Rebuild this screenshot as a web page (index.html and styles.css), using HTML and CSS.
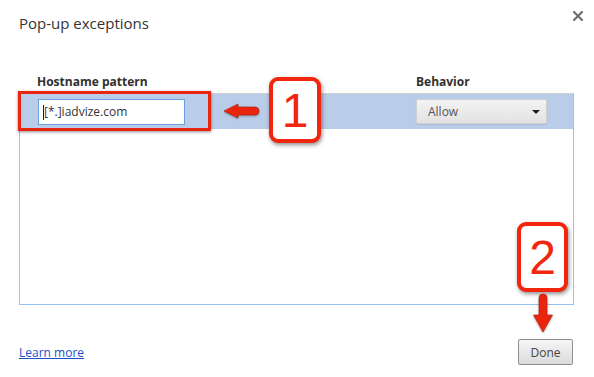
FILE: index.html
```html
<!DOCTYPE html>
<html>
<head>
<meta charset="utf-8">
<title>Pop-up exceptions</title>
<link rel="stylesheet" href="styles.css">
</head>
<body>
<div class="dialog">
  <header class="head">
    <h1 class="title">Pop-up exceptions</h1>
    <svg class="close" width="10" height="10" viewBox="0 0 10 10"><path d="M1 1 L9 9 M9 1 L1 9" stroke="#6f6f6f" stroke-width="2.2" stroke-linecap="square"/></svg>
  </header>

  <div class="cols">
    <span class="col-label">Hostname pattern</span>
    <span class="col-label">Behavior</span>
  </div>

  <div class="list">
    <div class="row selected">
      <div class="field"><span class="caret"></span>[*.]iadvize.com</div>
      <div class="select"><span>Allow</span><span class="tri"></span></div>
    </div>
  </div>

  <footer class="foot">
    <a class="learn" href="#">Learn more</a>
    <button class="done">Done</button>
  </footer>

  <div class="hl"></div>
  <svg class="arrow-left" width="40" height="18" viewBox="0 0 40 18"><path d="M2 9 L16 2 L16 5 L33 5 A4 4 0 0 1 33 13 L16 13 L16 16 Z" fill="#ea250e" stroke="#b51a08" stroke-width="0.6"/></svg>
  <div class="num num1">1</div>
  <div class="num num2">2</div>
  <svg class="arrow-down" width="22" height="42" viewBox="0 0 22 42"><path d="M7 6 A4 4 0 0 1 15 6 L15 23 L20.5 23 L11 40 L1.5 23 L7 23 Z" fill="#ea250e" stroke="#b51a08" stroke-width="0.6"/></svg>
</div>
</body>
</html>
```

FILE: styles.css
```css
* { box-sizing: border-box; }
html, body { margin: 0; padding: 0; background: #ffffff; }
body { font-family: "Open Sans", "Noto Sans", "Liberation Sans", sans-serif; color: #333; }

.dialog {
  position: relative;
  width: 594px;
  height: 377px;
  background: #fff;
  padding: 0 20px 0 19px;
  display: flex;
  flex-direction: column;
}

.head {
  display: flex;
  justify-content: space-between;
  align-items: flex-start;
  padding: 13px 0 0 0;
  margin-right: -9px;
}
.title {
  margin: 0;
  font-size: 15px;
  line-height: 20px;
  font-weight: normal;
  color: #333;
}
.close { margin-top: -2px; display: block; }

.cols {
  display: grid;
  grid-template-columns: 1fr 132px;
  padding: 0 26px 0 18px;
  margin-top: 41px;
}
.col-label {
  font-size: 12px;
  line-height: 16px;
  font-weight: bold;
  color: #303030;
}

.list {
  margin-top: 3px;
  height: 212px;
  border: 1px solid #97c1f3;
  border-top-color: #cfcfcf;
}
.row {
  display: grid;
  grid-template-columns: 1fr 131px;
  align-items: start;
  height: 35px;
  padding: 5px 26px 0 18px;
}
.row.selected { background: #bacde8; }

.field {
  width: 147px;
  height: 26px;
  background: #fff;
  border: 1px solid #6a9fe2;
  font-size: 12px;
  line-height: 24px;
  padding-left: 4px;
  color: #333;
  display: flex;
  align-items: center;
  white-space: nowrap;
}
.caret {
  display: inline-block;
  width: 1px;
  height: 15px;
  background: #222;
  margin-right: 0;
}

.select {
  height: 25px;
  border: 1px solid #d0d0d0;
  border-radius: 2px;
  background: linear-gradient(#f3f3f3, #e2e2e2);
  box-shadow: 0 1px 1px rgba(0,0,0,0.08);
  display: flex;
  align-items: center;
  justify-content: space-between;
  padding: 0 6px 0 11px;
  font-size: 12px;
  color: #555;
}
.tri {
  width: 0;
  height: 0;
  border-left: 4px solid transparent;
  border-right: 4px solid transparent;
  border-top: 4px solid #1e1e1e;
}

.foot {
  margin-top: 34px;
  display: flex;
  justify-content: space-between;
  align-items: center;
  margin-right: 1px;
  margin-left: 0;
}
.learn {
  font-size: 12px;
  line-height: 16px;
  color: #1b50c8;
  text-decoration: underline;
  margin-top: 2px;
}
.done {
  width: 55px;
  height: 26px;
  border: 1px solid #8e8e8e;
  border-radius: 2px;
  background: linear-gradient(#f5f5f5, #dcdcdc);
  font-family: "Open Sans", "Noto Sans", sans-serif;
  font-size: 12px;
  color: #444;
  padding: 0;
}

/* annotations */
.hl {
  position: absolute;
  left: 18px;
  top: 91px;
  width: 193px;
  height: 40px;
  border: 3px solid #e8250f;
  box-shadow: 0 1px 3px rgba(0,0,0,0.45);
}
.arrow-left {
  position: absolute;
  left: 222px;
  top: 102px;
  filter: drop-shadow(0 1px 1px rgba(0,0,0,0.35));
}
.arrow-down {
  position: absolute;
  left: 532px;
  top: 292px;
  filter: drop-shadow(0 1px 1px rgba(0,0,0,0.35));
}
.num {
  position: absolute;
  background: #fff;
  border: 4px solid #f2250d;
  border-radius: 9px;
  box-shadow: 1px 2px 4px rgba(0,0,0,0.45);
  font-family: "Liberation Sans", Arial, sans-serif;
  color: #f0260e;
  font-size: 48px;
  display: flex;
  align-items: center;
  justify-content: center;
}
.num1 { left: 269px; top: 77px; width: 52px; height: 66px; }
.num2 { left: 517px; top: 222px; width: 51px; height: 70px; }
```
